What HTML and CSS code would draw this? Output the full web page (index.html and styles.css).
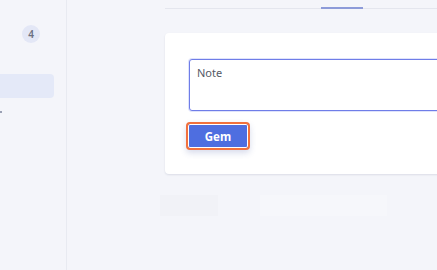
FILE: index.html
```html
<!DOCTYPE html>
<html lang="da">
  <head>
    <meta charset="UTF-8" />
    <meta name="viewport" content="width=device-width, initial-scale=1.0" />
    <title>Note</title>
    <link rel="stylesheet" href="styles.css">
  </head>
  <body>
    <div class="layout">
      <aside class="sidebar">
        <div class="badge">4</div>
        <div class="nav-item active"></div>
        <div class="nav-dot"></div>
      </aside>
      <main class="content">
        <div class="tabs">
          <div class="tab"></div>
          <div class="tab"></div>
          <div class="tab active"></div>
        </div>
        <div class="card">
          <textarea class="note" placeholder="Note"></textarea>
          <div class="actions">
            <button class="btn-save">Gem</button>
          </div>
        </div>
        <div class="ghosts">
          <div class="ghost small"></div>
          <div class="ghost wide"></div>
        </div>
      </main>
    </div>
  </body>
</html>
```

FILE: styles.css
```css
* {
  margin: 0;
  padding: 0;
  box-sizing: border-box;
}
html,
body {
  width: 100%;
  height: 100%;
  overflow: hidden;
}
body {
  background: #f4f5fa;
  font-family: "Noto Sans", "Open Sans", sans-serif;
}
.layout {
  display: flex;
  height: 100%;
}
.sidebar {
  width: 67px;
  flex-shrink: 0;
  border-right: 1px solid #e8eaf1;
  display: flex;
  flex-direction: column;
  padding-top: 25px;
}
.sidebar .badge {
  align-self: center;
  margin-left: -4px;
  width: 18px;
  height: 18px;
  border-radius: 50%;
  background: #e3e7f6;
  color: #6b6f80;
  font-size: 10px;
  font-weight: 600;
  display: flex;
  align-items: center;
  justify-content: center;
}
.sidebar .nav-item {
  margin-top: 31px;
  width: 54px;
  height: 24px;
  border-radius: 0 4px 4px 0;
}
.sidebar .nav-item.active {
  background: #e4e9f8;
}
.sidebar .nav-dot {
  margin-top: 13px;
  width: 2px;
  height: 2px;
  background: #9aa0b4;
}
.content {
  flex: 1;
  padding-left: 98px;
  min-width: 0;
}
.tabs {
  display: flex;
  height: 9px;
  border-bottom: 1px solid #e4e6ee;
}
.tabs .tab {
  width: 78px;
}
.tabs .tab.active {
  width: 42px;
  border-bottom: 2px solid #8d9bd9;
  margin-bottom: -1px;
}
.card {
  margin-top: 24px;
  width: 290px;
  background: #ffffff;
  border-radius: 4px;
  box-shadow: 0 1px 2px rgba(40, 50, 90, 0.12);
  padding: 26px 0 24px 24px;
}
.note {
  display: block;
  width: 260px;
  height: 52px;
  border: 1.5px solid #6f7de8;
  border-radius: 3px;
  padding: 5px 7px;
  font-family: inherit;
  font-size: 11px;
  color: #444;
  resize: none;
  outline: none;
  box-shadow: 0 0 0 1px #dfe3fb;
}
.note::placeholder {
  color: #555a66;
}
.actions {
  margin-top: 11px;
  margin-left: -3px;
}
.btn-save {
  width: 64px;
  height: 28px;
  border: 2px solid #f2713d;
  border-radius: 4px;
  background: #4e6ee0;
  box-shadow: inset 0 0 0 1px #ffffff, 0 3px 6px rgba(60, 80, 160, 0.2);
  color: #ffffff;
  font-family: inherit;
  font-size: 11.5px;
  font-weight: 700;
}
.ghosts {
  display: flex;
  margin-top: 21px;
  margin-left: -5px;
  gap: 42px;
}
.ghost {
  height: 21px;
  background: #f1f2f7;
}
.ghost.small {
  width: 58px;
}
.ghost.wide {
  width: 127px;
  background: #f6f7fb;
}
```
